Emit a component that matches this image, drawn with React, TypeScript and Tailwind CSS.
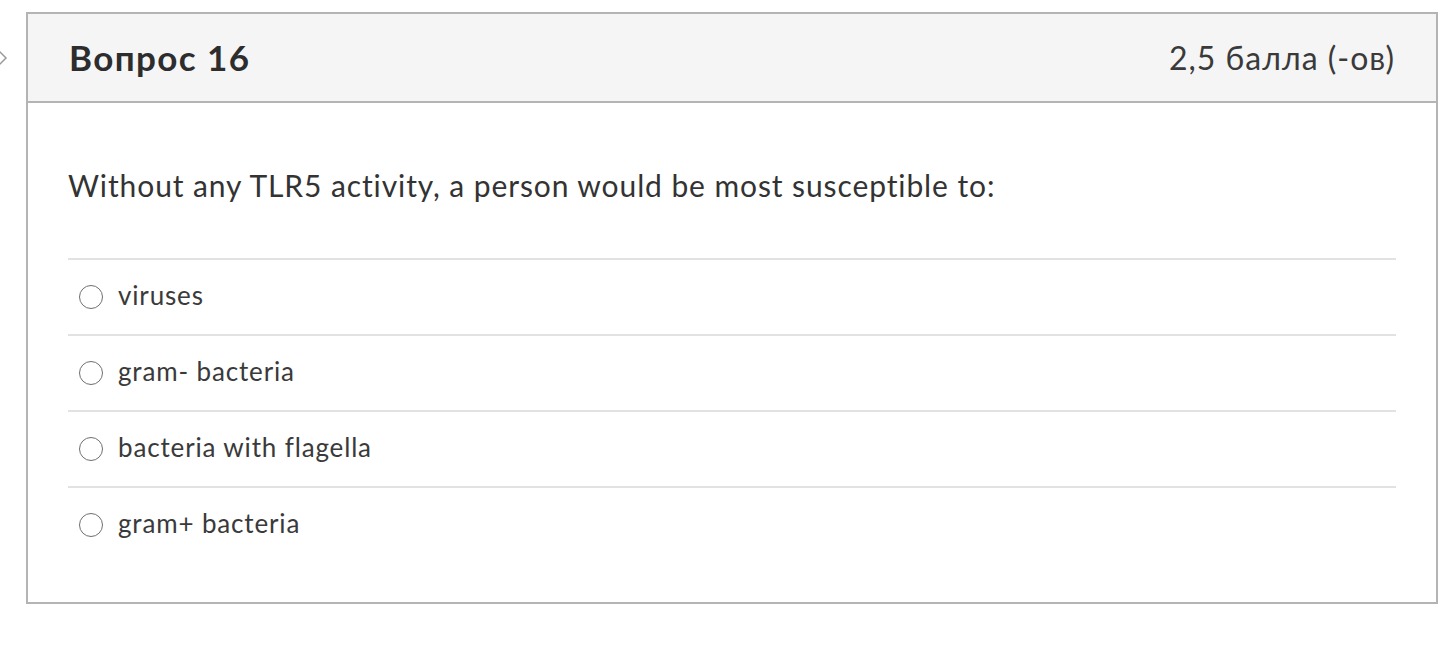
import React from 'react';

const options = ['viruses', 'gram- bacteria', 'bacteria with flagella', 'gram+ bacteria'];

export default function App() {
  return (
    <div className="relative min-h-[662px] bg-white pt-[12px] pl-[26px]" style={{ fontFamily: 'Lato, "Noto Sans", sans-serif' }}>
      {/* clipped chevron at left edge */}
      <svg className="absolute left-[-6px] top-[46px]" width="14" height="24" viewBox="0 0 14 24">
        <path d="M2 2 L12 12 L2 22" fill="none" stroke="#9a9a9a" strokeWidth="1.5" />
      </svg>

      <div className="w-[1412px] border-2 border-[#b4b4b4] text-[#333]">
        {/* Header */}
        <div className="flex h-[89px] items-center justify-between border-b-2 border-[#b4b4b4] bg-[#f5f5f6] px-[41px]">
          <h2 className="text-[35px] font-bold tracking-[1.4px] text-[#2d2d2d]">Вопрос 16</h2>
          <span className="text-[32px] tracking-[1px] text-[#3a3a3a]">2,5 балла (-ов)</span>
        </div>

        {/* Body */}
        <div className="px-[40px] pt-[64px] pb-[40px]">
          <p className="mb-[55px] text-[30px] leading-[36px] tracking-[0.9px]">
            Without any TLR5 activity, a person would be most susceptible to:
          </p>
          <div>
            {options.map((opt) => (
              <label key={opt} className="flex h-[76px] items-center gap-[15px] border-t-2 border-[#e2e2e2] pl-[11px]">
                <span className="h-[24px] w-[24px] rounded-full border-[1.5px] border-[#6f6f6f] bg-white" />
                <span className="pb-[3px] text-[26px] tracking-[0.85px] text-[#3a3a3a]">{opt}</span>
              </label>
            ))}
          </div>
        </div>
      </div>
    </div>
  );
}
